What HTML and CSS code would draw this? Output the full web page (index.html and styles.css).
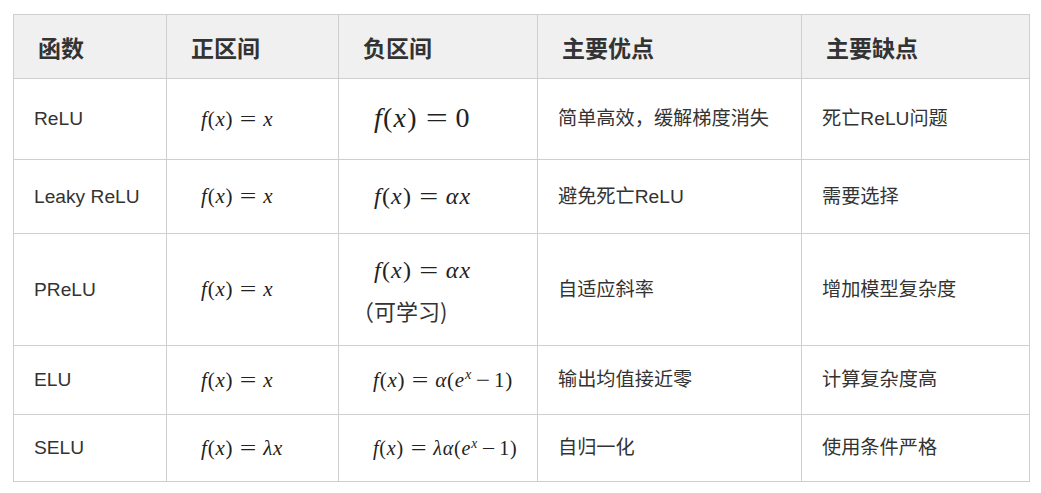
FILE: index.html
```html
<!DOCTYPE html>
<html lang="zh">
<head>
<meta charset="utf-8">
<title>激活函数对比</title>
<link rel="stylesheet" href="styles.css">
</head>
<body>
<table class="cmp">
  <colgroup>
    <col class="c1"><col class="c2"><col class="c3"><col class="c4"><col class="c5">
  </colgroup>
  <thead>
    <tr class="rh">
      <th>函数</th><th>正区间</th><th>负区间</th><th>主要优点</th><th>主要缺点</th>
    </tr>
  </thead>
  <tbody>
    <tr class="r1">
      <td>ReLU</td>
      <td><span class="m m2"><i>f</i>(<i>x</i>)<span class="eq">=</span><i>x</i></span></td>
      <td><span class="m m3l"><i>f</i>(<i>x</i>)<span class="eq">=</span>0</span></td>
      <td>简单高效，缓解梯度消失</td>
      <td>死亡ReLU问题</td>
    </tr>
    <tr class="r2">
      <td>Leaky ReLU</td>
      <td><span class="m m2"><i>f</i>(<i>x</i>)<span class="eq">=</span><i>x</i></span></td>
      <td><span class="m m3"><i>f</i>(<i>x</i>)<span class="eq">=</span><i>αx</i></span></td>
      <td>避免死亡ReLU</td>
      <td>需要选择</td>
    </tr>
    <tr class="r3">
      <td>PReLU</td>
      <td><span class="m m2"><i>f</i>(<i>x</i>)<span class="eq">=</span><i>x</i></span></td>
      <td>
        <span class="m m3 blk"><i>f</i>(<i>x</i>)<span class="eq">=</span><i>αx</i></span>
        <span class="note">（可学习)</span>
      </td>
      <td>自适应斜率</td>
      <td>增加模型复杂度</td>
    </tr>
    <tr class="r4">
      <td>ELU</td>
      <td><span class="m m2"><i>f</i>(<i>x</i>)<span class="eq">=</span><i>x</i></span></td>
      <td><span class="m m2"><i>f</i>(<i>x</i>)<span class="eq">=</span><i>α</i>(<i>e</i><sup><i>x</i></sup><span class="op">−</span>1)</span></td>
      <td>输出均值接近零</td>
      <td>计算复杂度高</td>
    </tr>
    <tr class="r5">
      <td>SELU</td>
      <td><span class="m m2"><i>f</i>(<i>x</i>)<span class="eq">=</span><i>λx</i></span></td>
      <td><span class="m m2 sm"><i>f</i>(<i>x</i>)<span class="eq">=</span><i>λα</i>(<i>e</i><sup><i>x</i></sup><span class="op">−</span>1)</span></td>
      <td>自归一化</td>
      <td>使用条件严格</td>
    </tr>
  </tbody>
</table>
</body>
</html>
```
FILE: styles.css
```css
html, body {
  margin: 0;
  padding: 0;
  background: #ffffff;
}

body {
  padding: 14px 0 0 13px;
  font-family: "Liberation Sans", "Noto Sans CJK SC", sans-serif;
  color: #333333;
}

.cmp {
  border-collapse: collapse;
  table-layout: fixed;
  width: 1016px;
}

.c1 { width: 153px; }
.c2 { width: 172px; }
.c3 { width: 199px; }
.c4 { width: 264px; }
.c5 { width: 228px; }

.cmp th,
.cmp td {
  border: 1px solid #cfcfcf;
  vertical-align: middle;
  text-align: left;
  white-space: nowrap;
}

.cmp th {
  background: #f0f0f0;
  font-family: "Noto Sans CJK SC", sans-serif;
  font-weight: 700;
  font-size: 23px;
  color: #333333;
  padding: 0 0 0 24px;
  line-height: 30px;
}

.cmp td {
  font-family: "Liberation Sans", "Noto Sans CJK SC", sans-serif;
  font-size: 19.2px;
  line-height: 26px;
  padding: 0 0 0 20px;
  color: #333333;
}

.rh { height: 64px; }
.r1 { height: 81px; }
.r2 { height: 74px; }
.r3 { height: 112px; }
.r4 { height: 69px; }
.r5 { height: 67px; }

.m {
  font-family: "Liberation Serif", "DejaVu Serif", serif;
  font-size: 21px;
  color: #222222;
  margin-left: 14px;
  letter-spacing: 0.8px;
  white-space: nowrap;
}

.m i {
  font-style: italic;
}

.m .eq {
  display: inline-block;
  transform: scaleX(1.4);
  margin: 0 9px;
  letter-spacing: 0;
}

.m .op {
  display: inline-block;
  transform: scaleX(1.2);
  margin: 0 5px;
  letter-spacing: 0;
}

.m sup {
  font-size: 0.68em;
  line-height: 0;
  vertical-align: 0.55em;
}

.m3 {
  font-size: 24px;
  margin-left: 15px;
  letter-spacing: 1.2px;
}

.m3l {
  font-size: 28px;
  margin-left: 15px;
  letter-spacing: 1.2px;
}

.m3 .eq {
  margin: 0 10px;
}

.m3l .eq {
  margin: 0 11px;
}

.sm {
  font-size: 20px;
}

.blk {
  display: block;
  line-height: 40px;
}

.note {
  display: block;
  font-family: "Noto Sans CJK SC", sans-serif;
  font-size: 22px;
  line-height: 40px;
  margin-left: -7px;
}
```
